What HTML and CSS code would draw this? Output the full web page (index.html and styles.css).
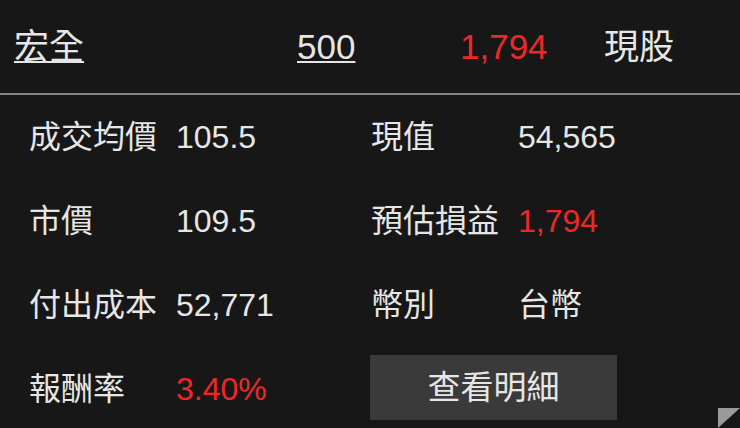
FILE: index.html
```html
<!DOCTYPE html>
<html lang="zh-Hant">
<head>
<meta charset="utf-8">
<link rel="stylesheet" href="styles.css">
</head>
<body>
<div class="screen">
  <div class="header">
    <span class="h-name link">宏全</span>
    <span class="h-qty link">500</span>
    <span class="h-pnl red">1,794</span>
    <span class="h-type">現股</span>
  </div>
  <div class="divider"></div>
  <div class="grid">
    <span class="label">成交均價</span>
    <span class="value">105.5</span>
    <span class="label">現值</span>
    <span class="value">54,565</span>

    <span class="label">市價</span>
    <span class="value">109.5</span>
    <span class="label">預估損益</span>
    <span class="value red">1,794</span>

    <span class="label">付出成本</span>
    <span class="value">52,771</span>
    <span class="label">幣別</span>
    <span class="value">台幣</span>

    <span class="label">報酬率</span>
    <span class="value red">3.40%</span>
    <div class="btn-cell"><button class="detail-btn">查看明細</button></div>
  </div>
  <div class="corner"></div>
</div>
</body>
</html>
```
FILE: styles.css
```css
html, body {
  margin: 0;
  padding: 0;
  background: #171717;
}
.screen {
  position: relative;
  width: 740px;
  height: 428px;
  overflow: hidden;
  background: #171717;
  color: #e6e6e6;
  font-family: "Liberation Sans", "Noto Sans CJK TC", sans-serif;
}
.header {
  display: flex;
  align-items: center;
  height: 93px;
  padding-left: 14px;
  font-size: 35px;
  line-height: 42px;
  box-sizing: border-box;
}
.link {
  text-decoration: underline;
  text-decoration-thickness: 2px;
  text-underline-offset: 2px;
}
.h-name { width: 283px; }
.h-qty { width: 163px; }
.h-pnl { width: 144px; }
.red { color: #ec2828; }
.divider {
  height: 2px;
  background: #858585;
}
.grid {
  display: grid;
  grid-template-columns: 147px 195px 147px 1fr;
  grid-auto-rows: 84px;
  padding-left: 29px;
  align-items: center;
  font-size: 32px;
  line-height: 40px;
}
.label {
  white-space: nowrap;
}
.value {
  white-space: nowrap;
}
.btn-cell {
  grid-column: 3 / 5;
  align-self: start;
  padding-top: 8px;
}
.detail-btn {
  display: block;
  width: 247px;
  height: 65px;
  margin-left: -1px;
  background: #3a3a3a;
  border: none;
  color: #e6e6e6;
  font-family: "Liberation Sans", "Noto Sans CJK TC", sans-serif;
  font-size: 33px;
  line-height: 40px;
  padding: 0;
}
.corner {
  position: absolute;
  right: 0;
  bottom: 0;
  width: 22px;
  height: 20px;
  background: #9a9a9a;
  clip-path: polygon(0 0, 100% 0, 0 100%);
}
```
